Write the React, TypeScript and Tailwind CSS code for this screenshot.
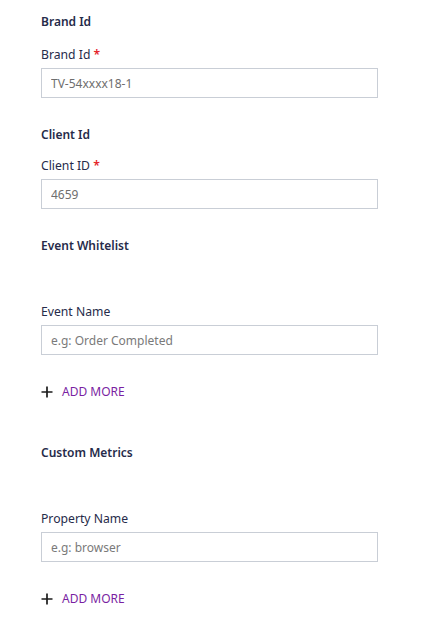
import React from "react";

const font = { fontFamily: '"Noto Sans", "Open Sans", sans-serif' };

function Heading({ children, className = "" }: { children: React.ReactNode; className?: string }) {
  return (
    <div className={`text-[12px] leading-[18px] font-semibold text-[#262b4a] ${className}`}>{children}</div>
  );
}

function Label({ children, required }: { children: React.ReactNode; required?: boolean }) {
  return (
    <div className="h-[18px] text-[12.2px] leading-[18px] text-[#262b4a]">
      {children}
      {required && <span className="text-[#e5252a] font-semibold leading-none"> *</span>}
    </div>
  );
}

function Input({ value, placeholder }: { value?: string; placeholder?: string }) {
  return (
    <input
      readOnly
      defaultValue={value}
      placeholder={placeholder}
      style={font}
      className="mt-[4px] block w-[337px] h-[30px] border border-[#c9ced6] bg-white px-[9px] text-[12px] text-[#6e6e6e] placeholder:text-[#7a7a7a] outline-none"
    />
  );
}

function AddMore({ className = "" }: { className?: string }) {
  return (
    <div className={`flex items-center h-[18px] ${className}`}>
      <svg width="12" height="12" viewBox="0 0 12 12" className="mr-[9px]">
        <path d="M6 0.5v11M0.5 6h11" stroke="#1c1c1c" strokeWidth="1.7" />
      </svg>
      <span className="text-[12px] text-[#7a1fa2]">ADD MORE</span>
    </div>
  );
}

export default function App() {
  return (
    <div style={font} className="bg-white w-[425px] h-[623px] pl-[41px] pt-[13px]">
      <Heading>Brand Id</Heading>
      <div className="mt-[15px]">
        <Label required>Brand Id</Label>
        <Input value="TV-54xxxx18-1" />
      </div>

      <Heading className="mt-[28px]">Client Id</Heading>
      <div className="mt-[13px]">
        <Label required>Client ID</Label>
        <Input value="4659" />
      </div>

      <Heading className="mt-[28px]">Event Whitelist</Heading>
      <div className="mt-[48px]">
        <Label>Event Name</Label>
        <Input placeholder="e.g: Order Completed" />
      </div>
      <AddMore className="mt-[28px]" />

      <Heading className="mt-[43px]">Custom Metrics</Heading>
      <div className="mt-[48px]">
        <Label>Property Name</Label>
        <Input placeholder="e.g: browser" />
      </div>
      <AddMore className="mt-[28px]" />
    </div>
  );
}
